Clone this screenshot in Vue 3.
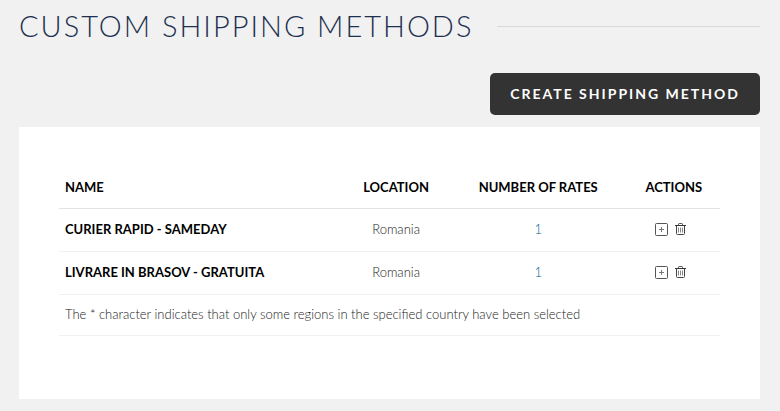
<script setup>
const methods = [
  { name: 'CURIER RAPID - SAMEDAY', location: 'Romania', rates: 1 },
  { name: 'LIVRARE IN BRASOV - GRATUITA', location: 'Romania', rates: 1 },
]
</script>

<template>
  <main class="page">
    <header class="heading">
      <h1>CUSTOM SHIPPING METHODS</h1>
      <span class="rule"></span>
    </header>

    <div class="toolbar">
      <button type="button" class="create">CREATE SHIPPING METHOD</button>
    </div>

    <section class="card">
      <table>
        <colgroup>
          <col class="col-name" />
          <col class="col-location" />
          <col class="col-rates" />
          <col class="col-actions" />
        </colgroup>
        <thead>
          <tr>
            <th scope="col" class="name">NAME</th>
            <th scope="col">LOCATION</th>
            <th scope="col">NUMBER OF RATES</th>
            <th scope="col">ACTIONS</th>
          </tr>
        </thead>
        <tbody>
          <tr v-for="method in methods" :key="method.name" class="method">
            <th scope="row" class="name">{{ method.name }}</th>
            <td>{{ method.location }}</td>
            <td><a href="#" class="rates">{{ method.rates }}</a></td>
            <td>
              <div class="actions">
                <button type="button" class="icon" aria-label="Add rate">
                  <svg width="13" height="13" viewBox="0 0 13 13" fill="none">
                    <rect x="0.5" y="0.5" width="12" height="12" rx="1" stroke="#555" />
                    <path d="M4 6.5h5M6.5 4v5" stroke="#777" />
                  </svg>
                </button>
                <button type="button" class="icon" aria-label="Delete method">
                  <svg width="11" height="12" viewBox="0 0 11 12" fill="none">
                    <path d="M0 2.500h11" stroke="#333" />
                    <path d="M3.500 2V1.200Q3.500 0.500 4.200 0.500h2.600Q7.500 0.500 7.500 1.200V2" stroke="#555" />
                    <path d="M1.500 3v7.500q0 1 1 1h6q1 0 1-1V3" stroke="#444" />
                    <path d="M3.500 4.500v5M5.500 4.500v5M7.500 4.500v5" stroke="#888" />
                  </svg>
                </button>
              </div>
            </td>
          </tr>
        </tbody>
        <tfoot>
          <tr>
            <td colspan="4" class="note">
              The * character indicates that only some regions in the specified country have been selected
            </td>
          </tr>
        </tfoot>
      </table>
    </section>
  </main>
</template>

<style>
body {
  background: #f1f1f1;
}
</style>

<style scoped>
.page {
  padding: 8px 20px 12px 19px;
  font-family: Lato, "Liberation Sans", sans-serif;
  font-size: 13px;
  line-height: 18px;
  font-weight: 300;
  color: #222;
}

.heading {
  display: flex;
  align-items: center;
  gap: 24px;
}

h1 {
  margin: 0;
  font-size: 29px;
  line-height: 36px;
  font-weight: 300;
  letter-spacing: 2px;
  white-space: nowrap;
  color: #1d3050;
}

.rule {
  flex: 1;
  height: 1px;
  background: #d8d8d8;
}

.toolbar {
  display: flex;
  justify-content: flex-end;
  margin: 29px 0 12px;
}

.create {
  padding: 12px 20px;
  border: 0;
  border-radius: 5px;
  background: #333;
  color: #fff;
  font-family: inherit;
  font-size: 14px;
  line-height: 18px;
  font-weight: 700;
  letter-spacing: 2px;
  white-space: nowrap;
  cursor: pointer;
}

.card {
  padding: 40px 40px 63px;
  background: #fff;
}

table {
  width: 100%;
  table-layout: fixed;
  border-collapse: separate;
  border-spacing: 0;
}

.col-name {
  width: 43%;
}

.col-location {
  width: 16%;
}

.col-rates {
  width: 27%;
}

.col-actions {
  width: 14%;
}

th,
td {
  padding: 11px 6px 12px;
  border-bottom: 1px solid #f1f1f1;
  text-align: center;
  white-space: nowrap;
}

th {
  font-weight: 700;
  color: #000;
}

thead th {
  border-bottom-color: #e2e2e2;
}

.method th,
.method td {
  padding: 11px 6px 13px;
}

.name,
.note {
  text-align: left;
}

.note {
  padding: 10px 6px 12px;
}

.rates {
  color: #00608a;
  text-decoration: none;
}

.actions {
  display: flex;
  align-items: center;
  justify-content: center;
  height: 18px;
}

.icon {
  display: flex;
  margin: 0 7px 0 0;
  padding: 0;
  border: 0;
  background: none;
  cursor: pointer;
}
</style>
